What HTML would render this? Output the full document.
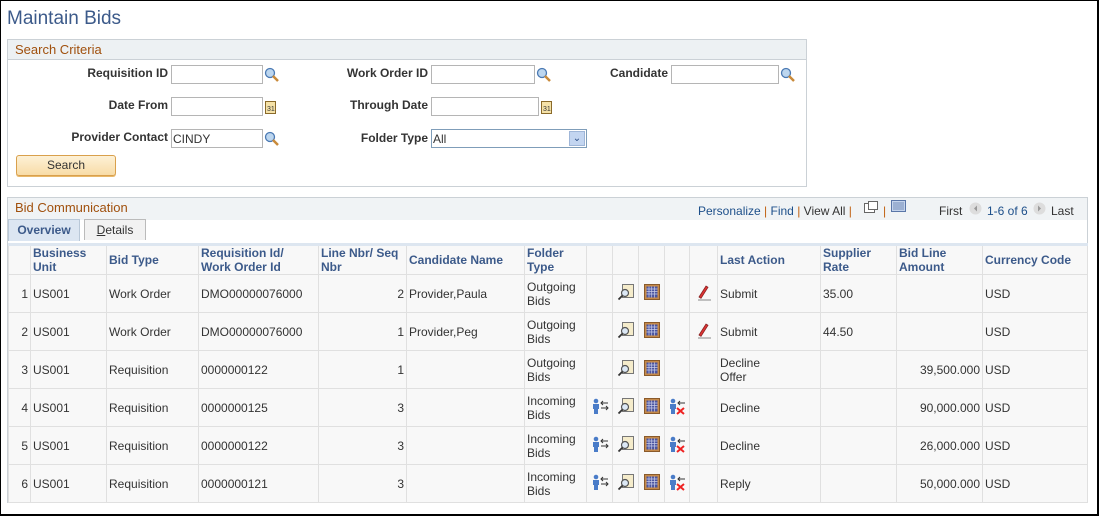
<!DOCTYPE html>
<html><head><meta charset="utf-8"><style>
*{margin:0;padding:0;box-sizing:border-box}
body{width:1099px;height:516px;background:#fff;font-family:"Liberation Sans",Arial,sans-serif;font-size:12px;color:#333;position:relative;overflow:hidden}
.frame{position:absolute;left:0;top:0;width:1099px;height:516px;border:1px solid #000;border-right-width:2px;border-bottom-width:2px}
.a{position:absolute}
h1{position:absolute;left:7px;top:8px;font-size:19px;font-weight:normal;color:#3c5a8a}
.box{position:absolute;border:1px solid #cbd1d6}
.bh{position:absolute;left:0;top:0;right:0;height:20px;background:#edf1f3;border-bottom:1px solid #cbd1d6;color:#a0500d;font-size:13px;padding:2px 7px}
.lbl{position:absolute;font-weight:bold;color:#333;text-align:right}
.inp{position:absolute;height:19px;border:1px solid #b5b5b5;background:#fff;font-size:12px;padding:2px 1px}
.mag{position:absolute;width:16px;height:16px}
.btn{position:absolute;left:16px;top:155px;width:100px;height:21px;border:1px solid #d9a04c;border-radius:3px;background:linear-gradient(#fdf1d6,#f8dca7);text-align:center;line-height:19px;font-size:12px;box-shadow:0 1px 0 #e8b86a}
table{position:absolute;left:8px;top:243px;border-collapse:collapse;table-layout:fixed}
td,th{border:1px solid #e0e0e0;height:38px;padding:0 2px;font-size:12px;vertical-align:middle;background:#f8f8f8;line-height:14px;color:#333;font-weight:normal;text-align:left}
th{height:30px;font-weight:bold;color:#3c5a8a;background:#f8f8f8;border-top:3px solid #dde6f0;vertical-align:middle}
td.r{text-align:right}
.lnk{color:#1d4f8a}
</style></head><body>
<div class="frame"></div>
<h1>Maintain Bids</h1>
<div class="box" style="left:7px;top:39px;width:800px;height:148px;">
 <div class="bh">Search Criteria</div>
</div>
<div class="lbl" style="left:60px;top:66px;width:108px">Requisition ID</div>
<div class="inp" style="left:171px;top:65px;width:92px"></div>
<svg class="mag" style="left:264px;top:67px" viewBox="0 0 16 16"><circle cx="6" cy="6" r="4.5" fill="#bcd6ef" stroke="#4a79b3" stroke-width="1.3"/><path d="M9 9l5 5" stroke="#c98a3a" stroke-width="2.5"/></svg>
<div class="lbl" style="left:60px;top:98px;width:108px">Date From</div>
<div class="inp" style="left:171px;top:97px;width:92px"></div>
<svg class="a" style="left:265px;top:100px" width="11" height="14" viewBox="0 0 11 14"><rect x=".5" y="1.5" width="10" height="12" fill="#f5e2a8" stroke="#8a6a2a"/><text x="2" y="11" font-size="7" font-family="Liberation Sans" fill="#333">31</text></svg>
<div class="lbl" style="left:40px;top:130px;width:128px">Provider Contact</div>
<div class="inp" style="left:171px;top:129px;width:92px">CINDY</div>
<svg class="mag" style="left:264px;top:131px" viewBox="0 0 16 16"><circle cx="6" cy="6" r="4.5" fill="#bcd6ef" stroke="#4a79b3" stroke-width="1.3"/><path d="M9 9l5 5" stroke="#c98a3a" stroke-width="2.5"/></svg>
<div class="lbl" style="left:320px;top:66px;width:108px">Work Order ID</div>
<div class="inp" style="left:431px;top:65px;width:104px"></div>
<svg class="mag" style="left:536px;top:67px" viewBox="0 0 16 16"><circle cx="6" cy="6" r="4.5" fill="#bcd6ef" stroke="#4a79b3" stroke-width="1.3"/><path d="M9 9l5 5" stroke="#c98a3a" stroke-width="2.5"/></svg>
<div class="lbl" style="left:320px;top:98px;width:108px">Through Date</div>
<div class="inp" style="left:431px;top:97px;width:108px"></div>
<svg class="a" style="left:541px;top:100px" width="11" height="14" viewBox="0 0 11 14"><rect x=".5" y="1.5" width="10" height="12" fill="#f5e2a8" stroke="#8a6a2a"/><text x="2" y="11" font-size="7" font-family="Liberation Sans" fill="#333">31</text></svg>
<div class="lbl" style="left:320px;top:131px;width:108px">Folder Type</div>
<div class="inp" style="left:431px;top:129px;width:156px;border-color:#7f9db9">All</div>
<div class="a" style="left:569px;top:131px;width:16px;height:15px;background:#c3d5f0;border:1px solid #9fb6d8;color:#2a4d86;font-size:10px;text-align:center;line-height:13px">&#8964;</div>
<div class="lbl" style="left:580px;top:66px;width:88px">Candidate</div>
<div class="inp" style="left:671px;top:65px;width:108px"></div>
<svg class="mag" style="left:780px;top:67px" viewBox="0 0 16 16"><circle cx="6" cy="6" r="4.5" fill="#bcd6ef" stroke="#4a79b3" stroke-width="1.3"/><path d="M9 9l5 5" stroke="#c98a3a" stroke-width="2.5"/></svg>
<div class="btn">Search</div>

<div class="box" style="left:7px;top:197px;width:1081px;height:306px;">
 <div class="bh" style="height:22px;border-bottom:none;background:#f0f3f5">Bid Communication</div>
</div>
<div class="a" style="left:698px;top:204px;font-size:12px"><span class="lnk">Personalize</span> <span style="color:#c06010">|</span> <span class="lnk">Find</span> <span style="color:#c06010">|</span> View All <span style="color:#c06010">|</span></div>
<svg class="a" style="left:864px;top:201px" width="14" height="12"><rect x=".5" y="2.5" width="10" height="9" fill="#fff" stroke="#666"/><rect x="4.5" y=".5" width="9" height="8" fill="#fff" stroke="#666"/></svg>
<div class="a" style="left:883px;top:204px;color:#c06010">|</div>
<svg class="a" style="left:891px;top:200px" width="15" height="12"><rect x=".5" y=".5" width="14" height="11" fill="#c5d4ec" stroke="#5a76a8"/><path d="M2 3h11M2 5h11M2 7h11M2 9h11" stroke="#5a76a8" stroke-width=".8"/></svg>
<div class="a" style="left:939px;top:204px">First</div>
<svg class="a" style="left:969px;top:202px" width="13" height="13"><circle cx="6.5" cy="6.5" r="6" fill="#ddd"/><path d="M8 3.5L5 6.5 8 9.5z" fill="#999"/></svg>
<div class="a lnk" style="left:987px;top:204px">1-6 of 6</div>
<svg class="a" style="left:1033px;top:202px" width="13" height="13"><circle cx="6.5" cy="6.5" r="6" fill="#ddd"/><path d="M5 3.5L8 6.5 5 9.5z" fill="#999"/></svg>
<div class="a" style="left:1051px;top:204px">Last</div>
<div class="a" style="left:8px;top:219px;width:72px;height:22px;background:#dce6f2;border:1px solid #b9c8d8;border-bottom:none;font-weight:bold;color:#3c5a8a;text-align:center;line-height:20px">Overview</div>
<div class="a" style="left:84px;top:219px;width:62px;height:21px;background:#f2f2f2;border:1px solid #bbb;border-bottom:none;color:#333;text-align:center;line-height:20px"><u>D</u>etails</div>

<table>
<colgroup><col style="width:22px"><col style="width:76px"><col style="width:92px"><col style="width:120px"><col style="width:88px"><col style="width:118px"><col style="width:62px"><col style="width:26px"><col style="width:26px"><col style="width:26px"><col style="width:25px"><col style="width:28px"><col style="width:103px"><col style="width:76px"><col style="width:86px"><col style="width:105px"></colgroup>
<tr><th></th><th>Business Unit</th><th>Bid Type</th><th>Requisition Id/ Work Order Id</th><th>Line Nbr/ Seq Nbr</th><th>Candidate Name</th><th>Folder Type</th><th></th><th></th><th></th><th></th><th></th><th>Last Action</th><th>Supplier Rate</th><th>Bid Line Amount</th><th>Currency Code</th></tr>
<tr><td class="r">1</td><td>US001</td><td>Work Order</td><td>DMO00000076000</td><td class="r">2</td><td>Provider,Paula</td><td>Outgoing Bids</td><td></td><td>M</td><td>C</td><td></td><td>P</td><td>Submit</td><td>35.00</td><td></td><td>USD</td></tr>
<tr><td class="r">2</td><td>US001</td><td>Work Order</td><td>DMO00000076000</td><td class="r">1</td><td>Provider,Peg</td><td>Outgoing Bids</td><td></td><td>M</td><td>C</td><td></td><td>P</td><td>Submit</td><td>44.50</td><td></td><td>USD</td></tr>
<tr><td class="r">3</td><td>US001</td><td>Requisition</td><td>0000000122</td><td class="r">1</td><td></td><td>Outgoing Bids</td><td></td><td>M</td><td>C</td><td></td><td></td><td>Decline<br>Offer</td><td></td><td class="r">39,500.000</td><td>USD</td></tr>
<tr><td class="r">4</td><td>US001</td><td>Requisition</td><td>0000000125</td><td class="r">3</td><td></td><td>Incoming Bids</td><td>T</td><td>M</td><td>C</td><td>X</td><td></td><td>Decline</td><td></td><td class="r">90,000.000</td><td>USD</td></tr>
<tr><td class="r">5</td><td>US001</td><td>Requisition</td><td>0000000122</td><td class="r">3</td><td></td><td>Incoming Bids</td><td>T</td><td>M</td><td>C</td><td>X</td><td></td><td>Decline</td><td></td><td class="r">26,000.000</td><td>USD</td></tr>
<tr><td class="r">6</td><td>US001</td><td>Requisition</td><td>0000000121</td><td class="r">3</td><td></td><td>Incoming Bids</td><td>T</td><td>M</td><td>C</td><td>X</td><td></td><td>Reply</td><td></td><td class="r">50,000.000</td><td>USD</td></tr>
</table>
<script>
var ic={
M:'<svg width="18" height="18"><rect x="5.5" y="1.5" width="11" height="13" fill="#f5eccb" stroke="#777"/><circle cx="8" cy="10" r="3.5" fill="#dce8f5" stroke="#555" stroke-width="1.2"/><path d="M5.5 12.5L1.5 16.5" stroke="#333" stroke-width="1.8"/></svg>',
C:'<svg width="16" height="16"><rect x=".5" y=".5" width="15" height="15" fill="#c58a4a" stroke="#8a5a2a"/><rect x="2.5" y="2.5" width="11" height="11" fill="#4b55a0"/><path d="M2.5 5h11M2.5 7.5h11M2.5 10h11M5 2.5v11M7.7 2.5v11M10.4 2.5v11" stroke="#c8cce8" stroke-width=".7"/></svg>',
P:'<svg width="18" height="18"><path d="M4 14L11 3l2 1.3-7 11z" fill="#d33" stroke="#822" stroke-width=".8"/><path d="M3 17h13" stroke="#888"/></svg>',
T:'<svg width="18" height="18"><circle cx="5" cy="4" r="2.3" fill="#4a7cc8"/><path d="M2 7h6v5H7v5H3v-5H2z" fill="#4a7cc8"/><path d="M10 6h7M12 4l-2 2 2 2M10 11h7M15 9l2 2-2 2" stroke="#333" fill="none"/></svg>',
X:'<svg width="18" height="18"><circle cx="5" cy="4" r="2.3" fill="#4a7cc8"/><path d="M2 7h6v5H7v5H3v-5H2z" fill="#4a7cc8"/><path d="M10 6h7M12 4l-2 2 2 2" stroke="#333" fill="none"/><path d="M9 11l7 6M16 11l-7 6" stroke="#e22" stroke-width="2"/></svg>'};
document.querySelectorAll('td').forEach(function(t){var k=t.textContent;if(ic[k]&&k.length==1){t.innerHTML=ic[k];t.style.textAlign='center';t.style.padding='0';}});
</script>
</body></html>
